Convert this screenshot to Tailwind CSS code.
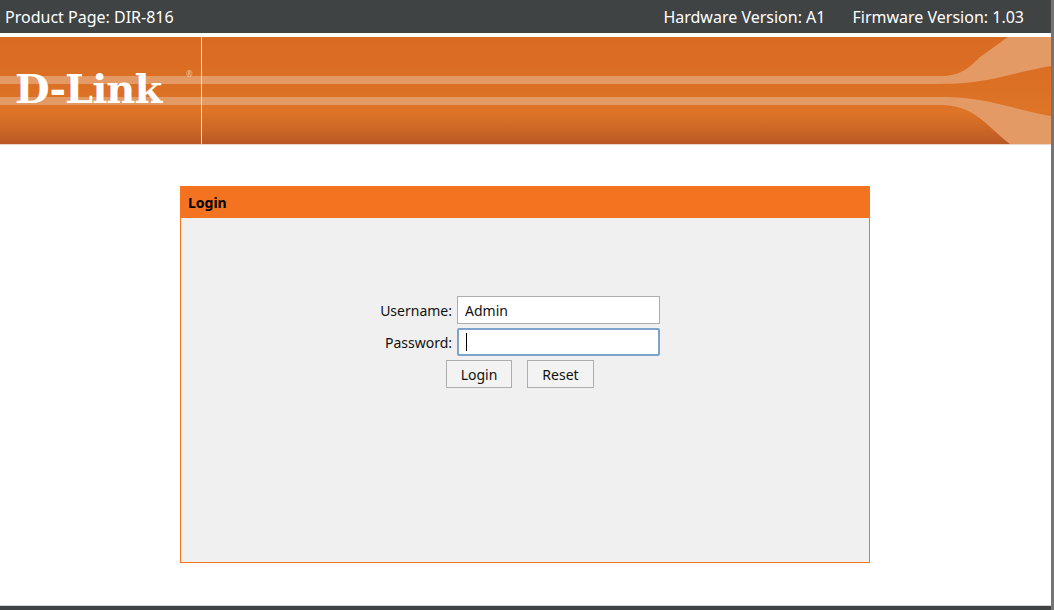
<!DOCTYPE html>
<html lang="en">
<head>
  <meta charset="UTF-8" />
  <title>D-Link DIR-816 Login</title>
  <script src="https://cdn.jsdelivr.net/npm/@tailwindcss/browser@4"></script>
</head>
<body class="h-[610px] w-[1054px] overflow-hidden bg-white font-['Noto_Sans','Open_Sans',sans-serif] text-black">
  <div class="flex h-[610px]">
    <div class="flex w-[1051px] flex-col">

      <!-- Top bar -->
      <div class="flex h-[33px] items-center justify-between bg-[#404344] pl-[5px] pr-[27px] text-[16px] text-white">
        <span>Product Page: DIR-816</span>
        <div class="flex gap-[27px]">
          <span>Hardware Version: A1</span>
          <span>Firmware Version: 1.03</span>
        </div>
      </div>

      <!-- Banner -->
      <div class="relative mt-[4px] h-[108px] overflow-hidden border-b border-[#ecd5c6]">
        <svg class="absolute inset-0" width="1051" height="107" viewBox="0 0 1051 107">
          <defs>
            <linearGradient id="bannerBg" x1="0" y1="0" x2="0" y2="1">
              <stop offset="0" stop-color="#d96a22" />
              <stop offset="0.7" stop-color="#dd7426" />
              <stop offset="0.85" stop-color="#cf6826" />
              <stop offset="1" stop-color="#b95726" />
            </linearGradient>
          </defs>
          <rect width="1051" height="107" fill="url(#bannerBg)" />
          <path d="M0 39H940C960 39 968 32 980 20L1008 0H1051V29C1010 36 990 47 940 47H0Z" fill="#e39a64" />
          <path d="M0 60H940C990 60 1010 72 1051 79V107H1010C985 88 975 68 940 68H0Z" fill="#e39a64" />
          <rect x="201" width="1" height="107" fill="#f6e3d6" />
        </svg>
        <span class="absolute left-[15px] top-[22px] font-['DejaVu_Serif',serif] text-[40px] leading-[60px] font-bold tracking-[-1px] text-white">D-Link</span>
        <span class="absolute left-[186px] top-[32px] text-[8px] leading-[10px] text-[#f0c8a8]">®</span>
      </div>

      <!-- Login panel -->
      <div class="flex-1 pl-[180px] pt-[41px]">
        <div class="flex h-[377px] w-[690px] flex-col border border-[#f47321] bg-[#f0f0f0]">
          <div class="flex h-[31px] items-center bg-[#f47321] pl-[7px] text-[14px] font-bold">Login</div>
          <form class="flex flex-col pt-[78px] text-[14px] text-[#111]">
            <div class="flex h-[28px] items-center">
              <label class="w-[271px] text-right">Username:</label>
              <input value="Admin" class="ml-[5px] h-[28px] w-[203px] border border-[#adadad] bg-white pl-[7px] text-[14px] outline-none" />
            </div>
            <div class="mt-[4px] flex h-[28px] items-center">
              <label class="w-[271px] text-right">Password:</label>
              <div class="ml-[5px] flex h-[28px] w-[203px] items-center rounded-[2px] border-2 border-[#7da2ce] bg-white pl-[7px]">
                <div class="h-[18px] w-px bg-black"></div>
              </div>
            </div>
            <div class="mt-[4px] flex pl-[265px]">
              <button type="button" class="h-[28px] w-[66px] border border-[#adadad] bg-[#f3f3f3]">Login</button>
              <button type="button" class="ml-[15px] h-[28px] w-[67px] border border-[#adadad] bg-[#f3f3f3]">Reset</button>
            </div>
          </form>
        </div>
      </div>

      <!-- Bottom edge -->
      <div class="h-[5px] border-t border-[#d4d4d4] bg-[#404344]"></div>
    </div>

    <!-- Scrollbar edge -->
    <div class="w-[3px] bg-[#757575]"></div>
  </div>
</body>
</html>
